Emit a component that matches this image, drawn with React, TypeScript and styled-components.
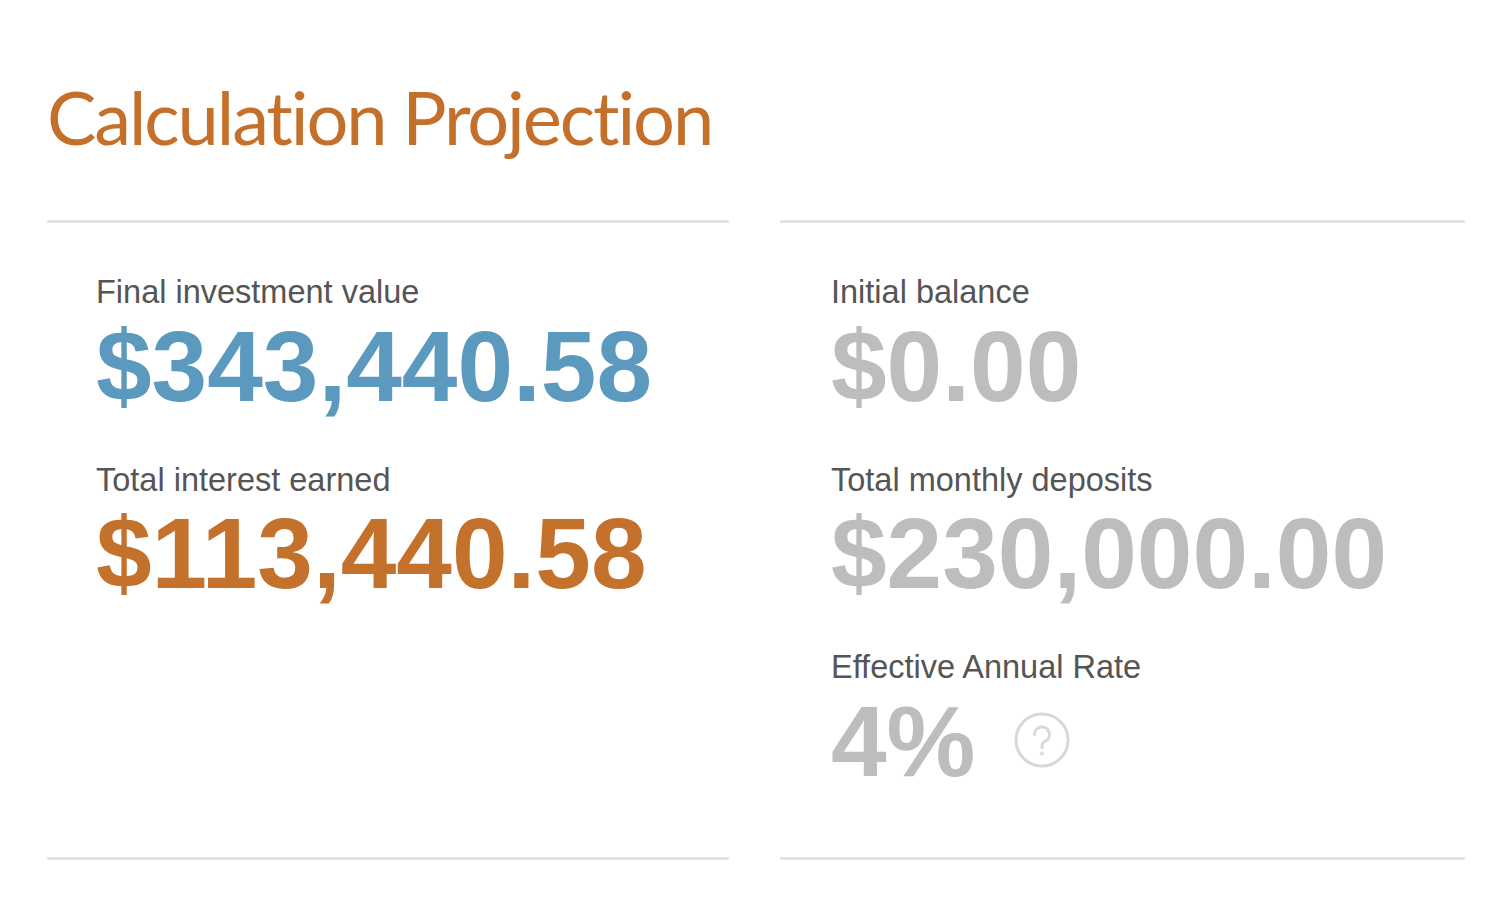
import React from "react";
import styled, { createGlobalStyle } from "styled-components";

const Global = createGlobalStyle`
  html, body { margin: 0; padding: 0; background: #fff; }
  body { font-family: "Liberation Sans", Arial, sans-serif; }
`;

const Page = styled.div`
  padding: 0 44px 0 47px;
  box-sizing: border-box;
  width: 1509px;
`;

const Title = styled.h1`
  margin: 0;
  padding-top: 80px;
  height: 220px;
  box-sizing: border-box;
  font-family: "Lato", sans-serif;
  font-weight: 400;
  font-size: 74px;
  line-height: 74px;
  color: #c4702b;
  letter-spacing: -2.1px;
`;

const Columns = styled.div`
  display: grid;
  grid-template-columns: 682px 685px;
  column-gap: 51px;
`;

const Column = styled.section<{ $inset: number }>`
  border-top: 3px solid #e4e4e4;
  border-bottom: 3px solid #e4e4e4;
  padding: 53px 0 66px ${(p) => p.$inset}px;
  display: flex;
  flex-direction: column;
  gap: 48px;
`;

const Stat = styled.div`
  display: flex;
  flex-direction: column;
  gap: 7px;
`;

const Label = styled.div`
  font-size: 32.5px;
  line-height: 32.5px;
  color: #555;
`;

const ValueRow = styled.div`
  display: flex;
  align-items: center;
  gap: 37px;
`;

const Value = styled.div<{ $color: string }>`
  font-weight: 700;
  font-size: 100px;
  line-height: 100px;
  color: ${(p) => p.$color};
`;

const HelpIcon = styled.svg`
  width: 58px;
  height: 58px;
  flex: none;
  margin-top: -2px;
`;

const Help = () => (
  <HelpIcon viewBox="0 0 58 58" fill="none" stroke="#d8d8d8" strokeWidth={3} strokeLinecap="round">
    <circle cx="29" cy="29" r="26" />
    <path d="M21.5 23.5a7.5 7.5 0 1 1 10.5 6.9c-2 0.9-3 2.4-3 4.6v1.5" />
    <circle cx="29" cy="42.5" r="0.6" fill="#d8d8d8" />
  </HelpIcon>
);

const BLUE = "#5b99bf";
const ORANGE = "#c4712b";
const GRAY = "#bdbdbd";

export default function App() {
  return (
    <Page>
      <Global />
      <Title>Calculation Projection</Title>
      <Columns>
        <Column $inset={49}>
          <Stat>
            <Label>Final investment value</Label>
            <Value $color={BLUE}>$343,440.58</Value>
          </Stat>
          <Stat>
            <Label>Total interest earned</Label>
            <Value $color={ORANGE}>$113,440.58</Value>
          </Stat>
        </Column>
        <Column $inset={51}>
          <Stat>
            <Label>Initial balance</Label>
            <Value $color={GRAY}>$0.00</Value>
          </Stat>
          <Stat>
            <Label>Total monthly deposits</Label>
            <Value $color={GRAY}>$230,000.00</Value>
          </Stat>
          <Stat>
            <Label>Effective Annual Rate</Label>
            <ValueRow>
              <Value $color={GRAY}>4%</Value>
              <Help />
            </ValueRow>
          </Stat>
        </Column>
      </Columns>
    </Page>
  );
}
